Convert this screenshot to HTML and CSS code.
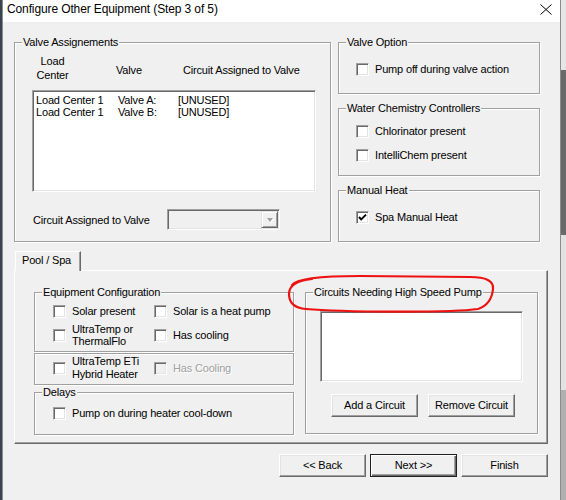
FILE: index.html
```html
<!DOCTYPE html>
<html>
<head>
<meta charset="utf-8">
<title>Configure Other Equipment</title>
<link rel="stylesheet" href="styles.css">
</head>
<body>
<div class="screen">
  <div class="desk-left"></div>
  <div class="window">
    <div class="titlebar">
      <span class="title">Configure Other Equipment (Step 3 of 5)</span>
      <svg class="close" width="12" height="11" viewBox="0 0 12 11"><path d="M0.5 0.5 L11.5 10.5 M11.5 0.5 L0.5 10.5" stroke="#000" stroke-width="1" fill="none"/></svg>
    </div>
    <div class="dialog">
      <div class="top-row">
        <div class="group g-valves">
          <div class="legend">Valve Assignements</div>
          <div class="va-head">
            <div class="h-lc">Load<br>Center</div>
            <div class="h-valve">Valve</div>
            <div class="h-circ">Circuit Assigned to Valve</div>
          </div>
          <div class="listbox va-list">
            <div class="li"><span class="c1">Load Center 1</span><span class="c2">Valve A:</span><span>[UNUSED]</span></div>
            <div class="li"><span class="c1">Load Center 1</span><span class="c2">Valve B:</span><span>[UNUSED]</span></div>
          </div>
          <div class="combo-row">
            <span class="combo-label">Circuit Assigned to Valve</span>
            <div class="combo"><div class="combo-btn"><span class="arrow"></span></div></div>
          </div>
        </div>
        <div class="right-col">
          <div class="group g-valve-opt">
            <div class="legend">Valve Option</div>
            <div class="check c-first14"><span class="cb"></span><span class="lbl">Pump off during valve action</span></div>
          </div>
          <div class="group g-chem">
            <div class="legend">Water Chemistry Controllers</div>
            <div class="check c-first10"><span class="cb"></span><span class="lbl">Chlorinator present</span></div>
            <div class="check c-next11"><span class="cb"></span><span class="lbl">IntelliChem present</span></div>
          </div>
          <div class="group g-heat">
            <div class="legend">Manual Heat</div>
            <div class="check c-first14"><span class="cb checked"><svg width="11" height="11" viewBox="0 0 11 11"><path d="M2 5 L4.2 7.4 L9 2.6" stroke="#000" stroke-width="1.9" fill="none"/></svg></span><span class="lbl">Spa Manual Heat</span></div>
          </div>
        </div>
      </div>

      <div class="tabs"><div class="tab">Pool / Spa</div></div>
      <div class="tab-panel">
        <div class="panel-left">
          <div class="group g-equip">
            <div class="legend">Equipment Configuration</div>
            <div class="grid2 equip-grid">
              <div class="check"><span class="cb"></span><span class="lbl">Solar present</span></div>
              <div class="check"><span class="cb"></span><span class="lbl">Solar is a heat pump</span></div>
              <div class="check"><span class="cb"></span><span class="lbl two12">UltraTemp or<br>ThermalFlo</span></div>
              <div class="check"><span class="cb"></span><span class="lbl">Has cooling</span></div>
            </div>
          </div>
          <div class="group g-eti">
            <div class="grid2 eti-grid">
              <div class="check"><span class="cb"></span><span class="lbl two13">UltraTemp ETi<br>Hybrid Heater</span></div>
              <div class="check disabled"><span class="cb"></span><span class="lbl">Has Cooling</span></div>
            </div>
          </div>
          <div class="group g-delays">
            <div class="legend">Delays</div>
            <div class="check delay-check"><span class="cb"></span><span class="lbl">Pump on during heater cool-down</span></div>
          </div>
        </div>
        <div class="group g-pump">
          <div class="legend">Circuits Needing High Speed Pump</div>
          <div class="listbox pump-list"></div>
          <div class="pump-buttons">
            <div class="btn">Add a Circuit</div>
            <div class="btn">Remove Circuit</div>
          </div>
        </div>
      </div>

      <div class="bottom-buttons">
        <div class="btn">&lt;&lt; Back</div>
        <div class="btn default">Next &gt;&gt;</div>
        <div class="btn">Finish</div>
      </div>
    </div>
  </div>
  <div class="desk-right"></div>
</div>
<svg class="annot" width="566" height="500" viewBox="0 0 566 500">
  <path d="M292 285 C296 279 318 276 360 276 L470 277 C486 277 494 281 493 289 C492 299 487 306 478 309 C450 313 340 312 306 309 C294 308 289 302 289 294 C289 287 294 281 312 279" stroke="#ee1111" stroke-width="2.2" fill="none" stroke-linecap="round"/>
</svg>
</body>
</html>
```

FILE: styles.css
```css
* { box-sizing: border-box; }
html, body { margin: 0; padding: 0; }
body {
  width: 566px;
  height: 500px;
  overflow: hidden;
  position: relative;
  font-family: "Liberation Sans", Arial, sans-serif;
  font-size: 11px;
  letter-spacing: -0.17px;
  color: #000;
  background: #dcdcdc;
}
.screen { display: flex; height: 500px; }
.desk-left { width: 2px; background: #3a4450; }
.window {
  width: 559px;
  border-left: 1px solid #8c8c8c;
  border-right: 1px solid #8c8c8c;
  background: #f0f0f0;
}
.desk-right {
  flex: 1;
  background: linear-gradient(to bottom, #e6e6e6 0, #e6e6e6 70px, #6a6a6a 70px, #6a6a6a 235px, #e2e2e2 235px, #e2e2e2 390px, #b0b0b0 390px);
}

/* title bar */
.titlebar {
  height: 22px;
  background: #fff;
  display: flex;
  justify-content: space-between;
  align-items: flex-start;
  padding-left: 4px;
}
.title { font-size: 12px; line-height: 19px; letter-spacing: -0.12px; }
.close { margin: 4px 8px 0 0; }

/* dialog */
.dialog { padding: 20px 0 0 11px; }
.top-row { display: flex; gap: 7px; height: 200px; }

.group {
  border: 1px solid #a0a0a0;
  box-shadow: inset 1px 1px 0 #fff, 1px 1px 0 #fff;
}
.legend {
  width: fit-content;
  margin: -7px 0 0 7px;
  padding: 0 1px;
  background: #f0f0f0;
  line-height: 13px;
  white-space: nowrap;
}

/* valve assignments */
.g-valves { width: 317px; height: 200px; }
.va-head { display: flex; align-items: flex-start; margin-top: 5px; line-height: 14px; }
.h-lc { width: 33px; margin-left: 21px; text-align: center; }
.h-valve { width: 67px; margin-left: 47px; padding-top: 9px; }
.h-circ { padding-top: 9px; white-space: nowrap; }

.listbox {
  background: #fff;
  border: 1px solid;
  border-color: #a0a0a0 #fff #fff #a0a0a0;
  box-shadow: inset 1px 1px 0 #696969, inset -1px -1px 0 #e3e3e3;
}
.va-list { width: 284px; height: 102px; margin: 8px 0 0 17px; padding: 3px 0 0 3px; }
.li { display: flex; line-height: 12px; white-space: nowrap; }
.c1 { width: 82px; }
.c2 { width: 60px; }

.combo-row { display: flex; align-items: center; margin: 17px 0 0 18px; }
.combo-label { width: 134px; white-space: nowrap; }
.combo {
  width: 113px;
  height: 21px;
  display: flex;
  justify-content: flex-end;
  align-items: center;
  padding: 1px;
  background: #f0f0f0;
  border: 1px solid;
  border-color: #a0a0a0 #fff #fff #a0a0a0;
  box-shadow: inset 1px 1px 0 #696969, inset -1px -1px 0 #e3e3e3;
}
.combo-btn {
  width: 17px;
  height: 17px;
  display: flex;
  align-items: center;
  justify-content: center;
  background: #f0f0f0;
  border: 1px solid;
  border-color: #e3e3e3 #696969 #696969 #e3e3e3;
  box-shadow: inset 1px 1px 0 #fff, inset -1px -1px 0 #a0a0a0;
}
.arrow {
  width: 0; height: 0;
  border-left: 3.5px solid transparent;
  border-right: 3.5px solid transparent;
  border-top: 4px solid #a0a0a0;
  filter: drop-shadow(1px 1px 0 #fff);
}

/* right column */
.right-col { width: 202px; display: flex; flex-direction: column; gap: 14px; }
.g-valve-opt { height: 52px; }
.g-chem { height: 68px; }
.g-heat { height: 52px; }

.check { display: flex; align-items: center; white-space: nowrap; }
.lbl { line-height: 13px; }
.cb {
  width: 13px;
  height: 13px;
  flex: none;
  margin-right: 6px;
  background: #fff;
  border: 1px solid;
  border-color: #a0a0a0 #fff #fff #a0a0a0;
  box-shadow: inset 1px 1px 0 #696969, inset -1px -1px 0 #e3e3e3;
  display: flex;
  align-items: center;
  justify-content: center;
}
.cb svg { display: block; margin: 0 0 0 0; }
.right-col .check { margin-left: 17px; }
.c-first14 { margin-top: 14px; }
.c-first10 { margin-top: 10px; }
.c-next11 { margin-top: 11px; }

/* tabs */
.tabs { display: flex; margin-top: 9px; padding-left: 1px; }
.tab {
  position: relative;
  z-index: 1;
  width: 66px;
  height: 20px;
  margin-bottom: -1px;
  padding: 1px 0 0 6px;
  line-height: 14px;
  background: #f0f0f0;
  border-top: 1px solid #fff;
  border-left: 1px solid #fff;
  border-right: 1px solid #696969;
  box-shadow: inset -1px 0 0 #a0a0a0;
  white-space: nowrap;
}
.tab-panel {
  width: 534px;
  height: 174px;
  display: flex;
  gap: 11px;
  padding: 21px 0 0 19px;
  border: 1px solid;
  border-color: #fff #696969 #696969 #fff;
  box-shadow: inset -1px -1px 0 #a0a0a0;
}
.panel-left { width: 260px; display: flex; flex-direction: column; }
.g-equip { height: 60px; }
.g-eti { height: 32px; margin-top: 1px; }
.g-delays { height: 43px; margin-top: 7px; }

.grid2 {
  display: grid;
  grid-template-columns: 101px auto;
  align-items: center;
  margin-left: 18px;
}
.equip-grid { margin-top: 6px; row-gap: 5px; }
.eti-grid { margin-top: 1px; }
.two12 { line-height: 12px; }
.two13 { line-height: 13px; }
.disabled .lbl { color: #a0a0a0; text-shadow: 1px 1px 0 #fff; }
.disabled .cb { background: #f0f0f0; }
.delay-check { margin: 8px 0 0 18px; }

.g-pump { width: 233px; height: 142px; }
.pump-list { width: 203px; height: 71px; margin: 12px 0 0 14px; }
.pump-buttons { display: flex; gap: 10px; margin: 12px 0 0 25px; }

/* buttons */
.btn {
  width: 87px;
  height: 23px;
  display: flex;
  align-items: center;
  justify-content: center;
  line-height: 13px;
  white-space: nowrap;
  background: #f0f0f0;
  border: 1px solid;
  border-color: #fff #696969 #696969 #fff;
  box-shadow: inset -1px -1px 0 #a0a0a0, inset 1px 1px 0 #e3e3e3;
}
.btn.default {
  border-color: #202020;
  box-shadow: inset 1px 1px 0 #fff, inset -1px -1px 0 #696969, inset -2px -2px 0 #a0a0a0;
}
.bottom-buttons {
  width: 534px;
  display: flex;
  justify-content: flex-end;
  gap: 4px;
  margin-top: 10px;
}

.annot { position: absolute; left: 0; top: 0; pointer-events: none; }
```
